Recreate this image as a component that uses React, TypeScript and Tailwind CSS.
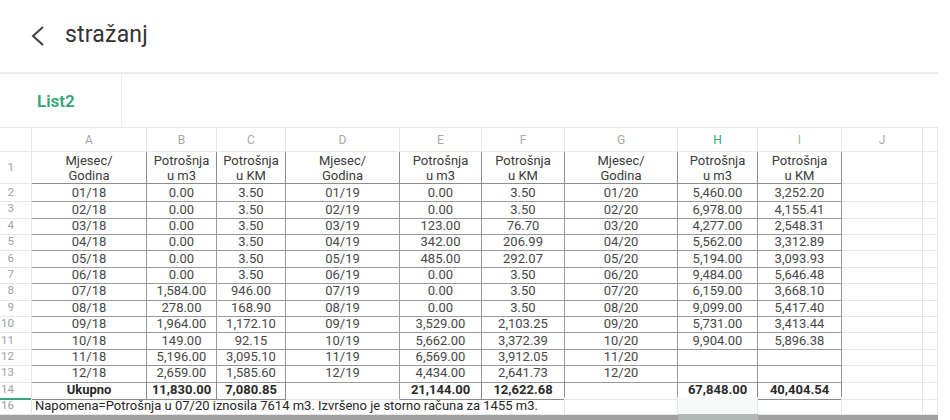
const cols = 'grid grid-cols-[32px_115px_70px_69px_114px_82px_83px_113px_80px_84px_81px_15px]';

const letters = ['A', 'B', 'C', 'D', 'E', 'F', 'G', 'H', 'I', 'J', ''];

const data: string[][] = [
  ['01/18', '0.00', '3.50', '01/19', '0.00', '3.50', '01/20', '5,460.00', '3,252.20'],
  ['02/18', '0.00', '3.50', '02/19', '0.00', '3.50', '02/20', '6,978.00', '4,155.41'],
  ['03/18', '0.00', '3.50', '03/19', '123.00', '76.70', '03/20', '4,277.00', '2,548.31'],
  ['04/18', '0.00', '3.50', '04/19', '342.00', '206.99', '04/20', '5,562.00', '3,312.89'],
  ['05/18', '0.00', '3.50', '05/19', '485.00', '292.07', '05/20', '5,194.00', '3,093.93'],
  ['06/18', '0.00', '3.50', '06/19', '0.00', '3.50', '06/20', '9,484.00', '5,646.48'],
  ['07/18', '1,584.00', '946.00', '07/19', '0.00', '3.50', '07/20', '6,159.00', '3,668.10'],
  ['08/18', '278.00', '168.90', '08/19', '0.00', '3.50', '08/20', '9,099.00', '5,417.40'],
  ['09/18', '1,964.00', '1,172.10', '09/19', '3,529.00', '2,103.25', '09/20', '5,731.00', '3,413.44'],
  ['10/18', '149.00', '92.15', '10/19', '5,662.00', '3,372.39', '10/20', '9,904.00', '5,896.38'],
  ['11/18', '5,196.00', '3,095.10', '11/19', '6,569.00', '3,912.05', '11/20', '', ''],
  ['12/18', '2,659.00', '1,585.60', '12/19', '4,434.00', '2,641.73', '12/20', '', ''],
];

const totals = ['Ukupno', '11,830.00', '7,080.85', '', '21,144.00', '12,622.68', '', '67,848.00', '40,404.54'];

const headers: [string, string][] = [
  ['Mjesec/', 'Godina'],
  ['Potrošnja', 'u m3'],
  ['Potrošnja', 'u KM'],
  ['Mjesec/', 'Godina'],
  ['Potrošnja', 'u m3'],
  ['Potrošnja', 'u KM'],
  ['Mjesec/', 'Godina'],
  ['Potrošnja', 'u m3'],
  ['Potrošnja', 'u KM'],
];

const RowNum = ({ n, green }: { n: number; green?: boolean }) => (
  <div
    className={
      'flex items-center justify-end pr-[17px] text-[11.5px] text-[#a0a0a0] border-r border-b ' +
      (green ? 'border-b-2 border-r-[#e6e6e6] border-b-[#3aa57c]' : 'border-[#e6e6e6]')
    }
  >
    {n}
  </div>
);

const Blank = () => <div className="border-r border-b border-[#e6e6e6]" />;

export default function App() {
  return (
    <div className="w-[950px] h-[420px] overflow-hidden bg-white font-['Roboto',sans-serif]">
      {/* title bar */}
      <div className="h-[72px] flex items-center">
        <svg width="14" height="22" viewBox="0 0 14 22" className="ml-[31px]">
          <polyline points="12,2 2,11 12,20" fill="none" stroke="#3f3f3f" strokeWidth="2" />
        </svg>
        <span className="ml-[20px] text-[23px] text-[#333] tracking-[0.2px] -mt-[2px]">stražanj</span>
      </div>
      <div className="w-[938px] h-[2px] bg-[#ebebeb]" />

      {/* sheet tabs */}
      <div className="h-[54px] w-[938px] flex border-b border-[#e8e8e8]">
        <div className="w-[122px] border-r border-[#ededed] flex items-center pl-[37px] pt-[2px]">
          <span className="text-[17px] font-semibold text-[#35a57b]">List2</span>
        </div>
      </div>

      {/* column letters */}
      <div className={cols + ' h-[24px]'}>
        <Blank />
        {letters.map((l, i) => (
          <div
            key={i}
            className={
              'flex items-center justify-center text-[12px] border-r border-b border-[#e6e6e6] ' +
              (l === 'H' ? 'text-[#35a57b]' : 'text-[#a8a8a8]')
            }
          >
            {l}
          </div>
        ))}
      </div>

      {/* row 1: headers */}
      <div className={cols + ' h-[32px]'}>
        <RowNum n={1} />
        {headers.map(([a, b], i) => (
          <div
            key={i}
            className="flex flex-col items-center justify-center text-[13px] leading-[15px] text-[#3a3a3a] border-r border-b border-[#8e8e8e]"
          >
            <span>{a}</span>
            <span>{b}</span>
          </div>
        ))}
        <Blank />
        <Blank />
      </div>

      {/* rows 2-13 */}
      {data.map((row, r) => (
        <div key={r} className={cols + ' h-[16.4px]'}>
          <RowNum n={r + 2} />
          {row.map((v, i) => (
            <div
              key={i}
              className="flex items-center justify-center text-[13px] leading-none text-[#474747] border-r border-b border-[#9a9a9a]"
            >
              {v}
            </div>
          ))}
          <Blank />
          <Blank />
        </div>
      ))}

      {/* row 14: totals */}
      <div className={cols + ' h-[16.4px]'}>
        <RowNum n={14} green />
        {totals.map((v, i) => (
          <div
            key={i}
            className={
              'flex items-center justify-center text-[13px] leading-none font-bold text-[#2a2a2a] border-r border-b ' +
              (i === 3 || i === 6 ? 'border-r-[#9a9a9a] border-b-[#e6e6e6]' : 'border-[#8a8a8a]')
            }
          >
            {v}
          </div>
        ))}
        <Blank />
        <Blank />
      </div>

      {/* row 16: note */}
      <div className={cols + ' h-[17px]'}>
        <RowNum n={16} />
        <div className="col-span-6 flex items-center pl-[3px] text-[13px] leading-none text-[#262626] whitespace-nowrap border-r border-b border-[#e6e6e6]">
          Napomena=Potrošnja u 07/20 iznosila 7614 m3. Izvršeno je storno računa za 1455 m3.
        </div>
        <Blank />
        <div className="border-r border-b border-[#e6e6e6] bg-[#f6faf8]" />
        <Blank />
        <Blank />
        <Blank />
      </div>

      {/* bottom bar */}
      <div className="w-[938px] h-[8px] bg-[#a0a0a0] flex">
        <div className="w-[678px]" />
        <div className="w-[80px] bg-[#b2b8b5]" />
      </div>
    </div>
  );
}
